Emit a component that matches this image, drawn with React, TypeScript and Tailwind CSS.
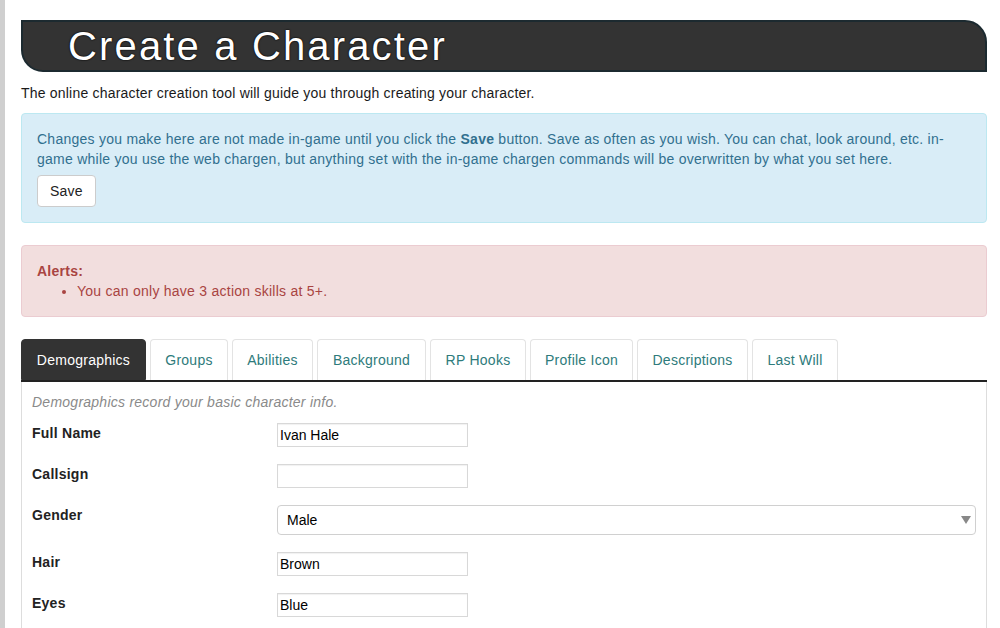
import React from "react";

const tabs = [
  { name: "Demographics", w: "w-[125px]" },
  { name: "Groups", w: "w-[78px]" },
  { name: "Abilities", w: "w-[81px]" },
  { name: "Background", w: "w-[109px]" },
  { name: "RP Hooks", w: "w-[96px]" },
  { name: "Profile Icon", w: "w-[103px]" },
  { name: "Descriptions", w: "w-[111px]" },
  { name: "Last Will", w: "w-[86px]" },
];

function TextRow({ label, value }: { label: string; value: string }) {
  return (
    <div className="flex items-start mb-[17px]">
      <div className="w-[245px] font-bold text-[#222] leading-[20px]">{label}</div>
      <input
        type="text"
        defaultValue={value}
        className="w-[191px] h-[24px] border border-[#d8d8d8] px-[2px] text-[14px] tracking-normal text-black outline-none shadow-[inset_0_1px_1px_rgba(0,0,0,0.06)]"
      />
    </div>
  );
}

export default function App() {
  return (
    <div className="flex min-h-screen bg-white font-['Liberation_Sans',Arial,sans-serif] text-[14px] leading-[20px] tracking-[0.25px] text-[#222]">
      <div className="w-[5px] shrink-0 bg-[#cfcfcf]" />
      <main className="w-[966px] ml-[16px] pt-[20px]">
        <header className="h-[52px] flex items-center pl-[45px] bg-[#333333] border-2 border-[#1c2a30] rounded-tr-[22px] rounded-bl-[22px]">
          <h1 className="text-[40px] leading-none tracking-[2.15px] text-white [text-shadow:0_0_2px_#000,0_0_1px_#000]">
            Create a Character
          </h1>
        </header>

        <p className="mt-[11px] text-[#1a1a1a] tracking-[0.2px]">
          The online character creation tool will guide you through creating your character.
        </p>

        <div className="mt-[10px] bg-[#d9edf7] border border-[#bce8f1] rounded-[4px] p-[15px] text-[#31708f]">
          <p>
            Changes you make here are not made in-game until you click the <strong>Save</strong> button. Save as often as you
            wish. You can chat, look around, etc. in-game while you use the web chargen, but anything set with the in-game
            chargen commands will be overwritten by what you set here.
          </p>
          <button className="mt-[6px] h-[32px] px-[12px] bg-white border border-[#ccc] rounded-[4px] text-[#222]">
            Save
          </button>
        </div>

        <div className="mt-[22px] bg-[#f2dede] border border-[#ebccd1] rounded-[4px] p-[15px] text-[#a94442]">
          <div className="font-bold">Alerts:</div>
          <ul className="list-disc pl-[40px]">
            <li>You can only have 3 action skills at 5+.</li>
          </ul>
        </div>

        <nav className="mt-[22px] flex items-end gap-[4px] border-b-2 border-[#222]">
          {tabs.map((t, i) => (
            <div
              key={t.name}
              className={
                i === 0
                  ? `${t.w} h-[41px] flex items-center justify-center whitespace-nowrap rounded-t-[4px] bg-[#333] border border-[#333] text-white`
                  : `${t.w} h-[41px] flex items-center justify-center whitespace-nowrap rounded-t-[4px] bg-white border border-b-0 border-[#e3e3e3] text-[#2e7b7b]`
              }
            >
              {t.name}
            </div>
          ))}
        </nav>

        <section className="border-x border-[#ddd] px-[10px] pt-[10px] pb-[20px]">
          <p className="italic text-[#8a8a8a] mb-[11px]">Demographics record your basic character info.</p>
          <TextRow label="Full Name" value="Ivan Hale" />
          <TextRow label="Callsign" value="" />
          <div className="flex items-start mb-[17px]">
            <div className="w-[245px] font-bold text-[#222] leading-[20px]">Gender</div>
            <div className="flex-1 h-[30px] flex items-center justify-between pl-[9px] pr-[4px] border border-[#d0d0d0] rounded-[4px] text-black tracking-normal">
              <span>Male</span>
              <svg width="10" height="8" viewBox="0 0 10 8">
                <path d="M0 0 H10 L5 8 Z" fill="#888" />
              </svg>
            </div>
          </div>
          <TextRow label="Hair" value="Brown" />
          <TextRow label="Eyes" value="Blue" />
        </section>
      </main>
    </div>
  );
}
